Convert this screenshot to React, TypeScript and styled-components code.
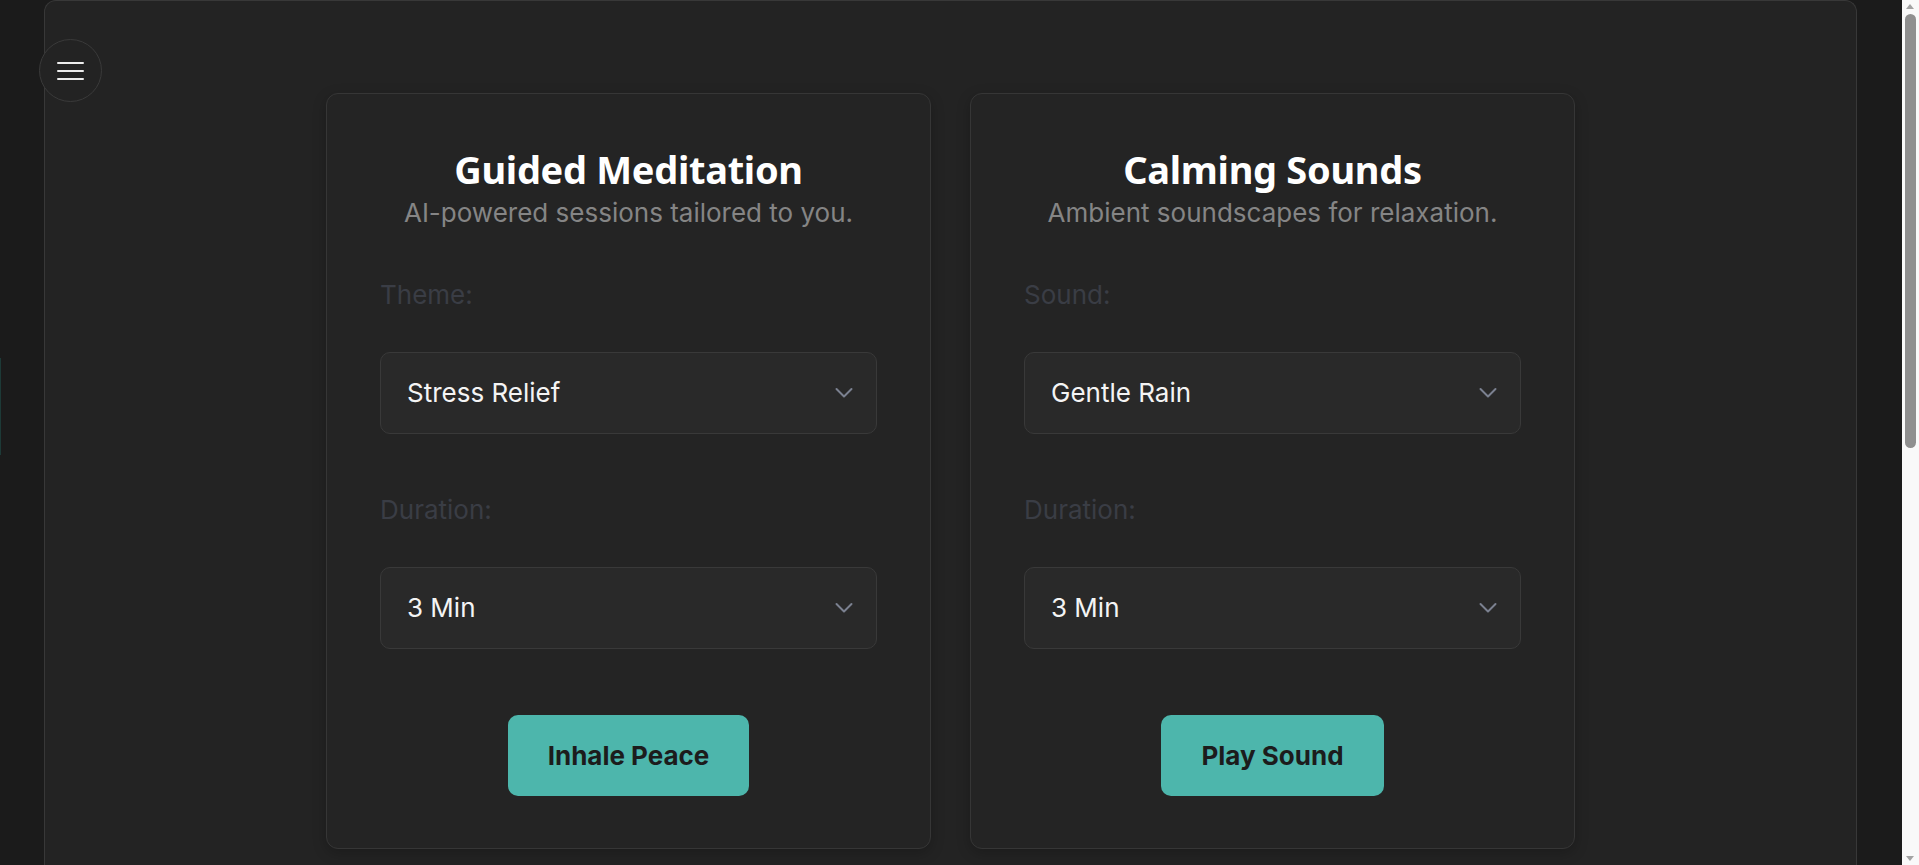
import React from "react";
import styled, { createGlobalStyle } from "styled-components";

interface SessionCardProps {
  title: string;
  subtitle: string;
  firstLabel: string;
  firstValue: string;
  durationValue: string;
  action: string;
}

const GlobalStyle = createGlobalStyle`
  html, body {
    margin: 0;
    padding: 0;
    background: #1b1b1b;
  }
  body {
    font-family: "Inter", "Liberation Sans", sans-serif;
    color: #ffffff;
  }
  * {
    box-sizing: border-box;
  }
`;

function Chevron() {
  return (
    <svg width="18" height="11" viewBox="0 0 18 11" fill="none">
      <path d="M1.5 1.5 L9 9 L16.5 1.5" stroke="#7b8190" strokeWidth="2" strokeLinecap="round" strokeLinejoin="round" />
    </svg>
  );
}

function SelectField({ label, value }: { label: string; value: string }) {
  return (
    <Field>
      <Label>{label}</Label>
      <SelectBox>
        <Select defaultValue={value}>
          <option>{value}</option>
        </Select>
        <ChevronSlot>
          <Chevron />
        </ChevronSlot>
      </SelectBox>
    </Field>
  );
}

function SessionCard({ title, subtitle, firstLabel, firstValue, durationValue, action }: SessionCardProps) {
  return (
    <Card>
      <Header>
        <Title>{title}</Title>
        <Subtitle>{subtitle}</Subtitle>
      </Header>
      <SelectField label={firstLabel} value={firstValue} />
      <SelectField label="Duration:" value={durationValue} />
      <ButtonRow>
        <ActionButton>{action}</ActionButton>
      </ButtonRow>
    </Card>
  );
}

export default function App() {
  return (
    <>
      <GlobalStyle />
      <SidebarEdge />
      <Page>
        <Panel>
          <MenuButton aria-label="Menu">
            <MenuLine />
            <MenuLine />
            <MenuLine />
          </MenuButton>
          <CardRow>
            <SessionCard
              title="Guided Meditation"
              subtitle="AI-powered sessions tailored to you."
              firstLabel="Theme:"
              firstValue="Stress Relief"
              durationValue="3 Min"
              action="Inhale Peace"
            />
            <SessionCard
              title="Calming Sounds"
              subtitle="Ambient soundscapes for relaxation."
              firstLabel="Sound:"
              firstValue="Gentle Rain"
              durationValue="3 Min"
              action="Play Sound"
            />
          </CardRow>
        </Panel>
      </Page>
      <ScrollRail>
        <ArrowUp />
        <ScrollThumb />
        <ArrowDown />
      </ScrollRail>
    </>
  );
}

const Page = styled.div`
  height: 100vh;
  overflow: hidden;
  padding: 0 62px 0 44px;
`;

const SidebarEdge = styled.div`
  position: fixed;
  left: 0;
  top: 358px;
  width: 1px;
  height: 97px;
  background: #1d3a37;
`;

const ScrollRail = styled.div`
  position: fixed;
  top: 0;
  right: 0;
  width: 17px;
  height: 100vh;
  background: #f9f9f9;
`;

const ArrowUp = styled.span`
  position: absolute;
  top: 4px;
  left: 4px;
  width: 0;
  height: 0;
  border-left: 4.5px solid transparent;
  border-right: 4.5px solid transparent;
  border-bottom: 5px solid #a3a3a3;
`;

const ArrowDown = styled.span`
  position: absolute;
  bottom: 4px;
  left: 4px;
  width: 0;
  height: 0;
  border-left: 4.5px solid transparent;
  border-right: 4.5px solid transparent;
  border-top: 5px solid #a3a3a3;
`;

const ScrollThumb = styled.span`
  position: absolute;
  top: 14px;
  left: 3px;
  width: 11px;
  height: 434px;
  border-radius: 6px;
  background: #8f8f8f;
`;

const Panel = styled.main`
  position: relative;
  min-height: 1664px;
  background: #232323;
  border: 1px solid #383838;
  border-bottom: none;
  border-radius: 12px 12px 0 0;
  padding-top: 92px;
`;

const MenuButton = styled.button`
  position: absolute;
  left: -6px;
  top: 38px;
  width: 63px;
  height: 63px;
  border-radius: 50%;
  border: 1px solid #3a3a3a;
  background: #232323;
  display: flex;
  flex-direction: column;
  align-items: center;
  justify-content: center;
  gap: 6px;
  padding: 0;
  cursor: pointer;
`;

const MenuLine = styled.span`
  width: 27px;
  height: 2px;
  border-radius: 1px;
  background: #ececec;
`;

const CardRow = styled.div`
  display: flex;
  justify-content: center;
  gap: 39px;
`;

const Card = styled.section`
  width: 605px;
  background: #242424;
  border: 1px solid #363636;
  border-radius: 12px;
  box-shadow: 0 4px 14px rgba(0, 0, 0, 0.22);
  padding: 53px 53px 52px;
  display: flex;
  flex-direction: column;
`;

const Header = styled.div`
  text-align: center;
`;

const Title = styled.h2`
  margin: 0;
  font-family: "Noto Sans", "Open Sans", sans-serif;
  font-weight: 700;
  font-size: 38px;
  line-height: 1.2;
  letter-spacing: -0.3px;
  color: #ffffff;
`;

const Subtitle = styled.p`
  margin: 0;
  font-size: 26px;
  line-height: 1.5;
  color: #858585;
`;

const Field = styled.div`
  margin-top: 43px;
  display: flex;
  flex-direction: column;
  gap: 38px;

  & + & {
    margin-top: 56px;
  }
`;

const Label = styled.label`
  font-size: 26px;
  line-height: 1.5;
  color: #3a3d45;
`;

const SelectBox = styled.div`
  position: relative;
`;

const Select = styled.select`
  appearance: none;
  width: 100%;
  height: 82px;
  padding: 0 60px 0 26px;
  background: #292929;
  border: 1px solid #393939;
  border-radius: 10px;
  color: #f4f4f4;
  font-family: "Inter", "Liberation Sans", sans-serif;
  font-size: 26px;
  outline: none;
`;

const ChevronSlot = styled.span`
  position: absolute;
  right: 24px;
  top: 50%;
  transform: translateY(-50%);
  display: flex;
  pointer-events: none;
`;

const ButtonRow = styled.div`
  margin-top: 66px;
  display: flex;
  justify-content: center;
`;

const ActionButton = styled.button`
  height: 81px;
  padding: 0 40px;
  background: #4db6ac;
  border: none;
  border-radius: 10px;
  color: #1c1c1c;
  font-family: "Inter", "Liberation Sans", sans-serif;
  font-weight: 700;
  font-size: 26px;
  cursor: pointer;
`;
